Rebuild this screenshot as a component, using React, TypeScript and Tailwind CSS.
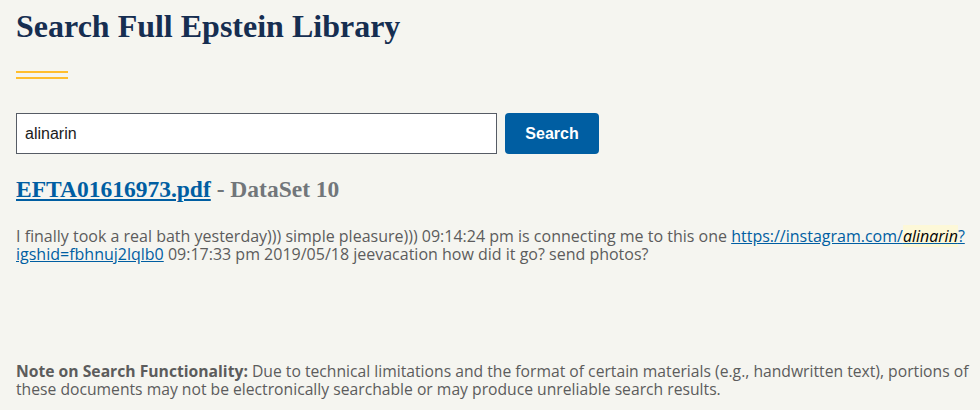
import React from 'react';

const sans = { fontFamily: '"Liberation Sans", Roboto, sans-serif' };
const body = { fontFamily: '"Open Sans", "Liberation Sans", sans-serif' };

export default function App() {
  return (
    <div className="min-h-[410px] bg-[#f5f5f0] pl-4 pr-[6px] pt-[8px] text-[#5c5c5c]" style={sans}>
      <h1 className="font-['Liberation_Serif',serif] text-[32px] font-bold leading-[36px] text-[#162e51]">
        Search Full Epstein Library
      </h1>

      <div className="mt-[27px] flex w-[52px] flex-col gap-[4px]">
        <div className="h-[2px] bg-[#ffbe2e]" />
        <div className="h-[2px] bg-[#ffbe2e]" />
      </div>

      <form className="mt-[34px] flex items-stretch gap-[8px]" onSubmit={(e) => e.preventDefault()}>
        <input
          defaultValue="alinarin"
          className="h-[41px] w-[481px] border border-[#565c65] bg-white px-[8px] text-[16px] text-[#1b1b1b] outline-none"
          style={sans}
        />
        <button
          type="submit"
          className="h-[41px] w-[94px] rounded-[4px] bg-[#005ea2] text-[16px] font-bold text-white"
        >
          Search
        </button>
      </form>

      <h2 className="mt-[21px] font-['Liberation_Serif',serif] text-[23.5px] font-bold leading-[28px] text-[#71767a]">
        <a href="#" className="text-[#005ea2] underline">EFTA01616973.pdf</a> - DataSet 10
      </h2>

      <p className="mt-[24px] text-[16px] leading-[18px]" style={body}>
        I finally took a real bath yesterday))) simple pleasure))) 09:14:24 pm is connecting me to this one{' '}
        <a href="#" className="text-[#005ea2] underline">
          https://instagram.com/<em className="bg-[#fdf8d8] text-black">alinarin</em>?igshid=fbhnuj2lqlb0
        </a>{' '}
        09:17:33 pm 2019/05/18 jeevacation how did it go? send photos?
      </p>

      <p className="mt-[99px] text-[15.7px] leading-[18px]" style={body}>
        <strong>Note on Search Functionality:</strong> Due to technical limitations and the format of certain
        materials (e.g., handwritten text), portions of these documents may not be electronically searchable or
        may produce unreliable search results.
      </p>
    </div>
  );
}
